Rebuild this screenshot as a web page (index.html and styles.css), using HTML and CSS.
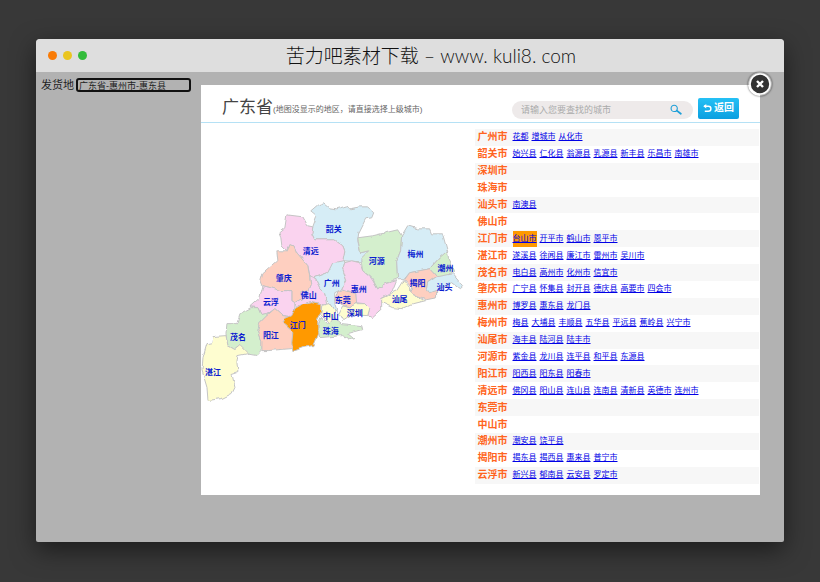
FILE: index.html
```html
<!DOCTYPE html>
<html lang="zh-CN">
<head>
<meta charset="utf-8">
<title>苦力吧素材下载</title>
<link rel="stylesheet" href="styles.css">
</head>
<body>
<div class="window">
  <header class="titlebar">
    <div class="dots"><i class="dot red"></i><i class="dot yellow"></i><i class="dot green"></i></div>
    <h1 class="site">苦力吧素材下载 – <span class="url">www. kuli8. com</span></h1>
  </header>
  <main class="page">
    <div class="origin">
      <label for="origin">发货地</label>
      <input id="origin" type="text" value="广东省-惠州市-惠东县">
    </div>
    <section class="dialog">
      <button class="close" type="button" aria-label="关闭">
        <svg viewBox="0 0 24 24"><circle cx="12" cy="12" r="10" fill="#333" stroke="#fff" stroke-width="1.6"/><path d="M9 9l6 6M15 9l-6 6" stroke="#fff" stroke-width="2.4"/></svg>
      </button>
      <div class="dialog-head">
        <h2 class="province">广东省</h2>
        <p class="hint">(地图没显示的地区，请直接选择上级城市)</p>
        <form class="search">
          <input type="text" aria-label="查找城市" placeholder="请输入您要查找的城市">
          <button class="find" type="button" aria-label="查找">
            <svg viewBox="0 0 12 12"><circle cx="4.2" cy="4.4" r="3.1" fill="none" stroke="#1e9fd8" stroke-width="1.1"/><path d="M6.8 6.6l4 3.1" stroke="#1e9fd8" stroke-width="1.8" stroke-linecap="round"/></svg>
          </button>
        </form>
        <button class="back" type="button">
          <svg viewBox="0 0 10 10"><path d="M1 2.5h5a2.8 2.8 0 0 1 0 5.6H2" fill="none" stroke="#fff" stroke-width="1.6"/><path d="M0.4 2.5L3.6 0v5z" fill="#fff"/></svg>返回
        </button>
      </div>
      <div class="dialog-body">
        <svg class="map" viewBox="201 128 274 356">
          <defs>
            <filter id="coast" x="-5%" y="-5%" width="110%" height="110%">
              <feTurbulence type="fractalNoise" baseFrequency="0.14" numOctaves="1" seed="4"/>
              <feDisplacementMap in="SourceGraphic" scale="4" xChannelSelector="R" yChannelSelector="G"/>
            </filter>
          </defs>
          <g class="areas" filter="url(#coast)">
            <path class="blue" d="M324 202L330 207 337 208 347 205 350 208 360 206 368 206 374 212 372 217 366 218 359 232 358 240 361 252 369 250 362 258 361 261 343 260 345 250 343 245 335 239 315 239 312 233 313 226 317 215 311 210 318 204Z"/>
            <path class="pink" d="M287 214L303 216 308 225 313 226 312 233 315 239 335 239 343 245 345 250 343 260 328 272 315 277 310 275 308 265 297 252 294 245 289 244 287 250 282 245 281 237 279 232 285 227Z"/>
            <path class="peach" d="M294 245L297 252 308 265 310 277 311 283 308 290 301 292 302 298 295 302 292 300 292 290 282 290 263 285 261 280 263 273 278 260 277 250 287 250 289 244Z"/>
            <path class="pink" d="M263 285L282 290 292 290 292 300 295 302 295 310 292 316 283 315 275 308 268 313 261 314 258 307 250 306 260 297Z"/>
            <path class="pink" d="M310 275L315 277 320 287 325 292 327 305 318 302 310 301 297 308 295 302 302 298 301 292 308 290 311 283Z"/>
            <path class="green" d="M251 307L258 307 261 314 270 312 267 315 260 322 258 330 262 340 262 349 257 354 245 352 240 345 235 349 228 345 226 333 227 323 237 323 240 313Z"/>
            <path class="peach" d="M275 308L283 315 292 316 283 323 293 332 292 348 268 350 262 350 262 340 258 330 260 322 267 315Z"/>
            <path class="yellow" d="M226 335L228 345 235 349 240 345 248 353 238 355 237 362 238 371 232 373 235 387 232 393 222 398 208 400 207 387 202 370 203 357 207 343 212 342 213 336Z"/>
            <path class="green" d="M321 316L328 323 335 317 342 323 362 325 363 329 348 333 354 338 350 339 343 335 320 337 318 328Z"/>
            <path class="blue" d="M315 277L328 272 333 262 343 260 345 262 343 268 347 280 343 288 335 292 335 303 338 312 333 307 327 300 325 292 320 287Z"/>
            <path class="pink" d="M345 262L352 260 360 262 363 270 372 278 378 288 385 283 397 280 393 290 382 297 382 308 372 317 368 315 370 308 365 303 356 302 356 293 343 288 347 280 343 268Z"/>
            <path class="yellow" d="M343 305L350 307 357 303 365 303 370 308 368 315 352 314 343 320 339 313Z"/>
            <path class="peach" d="M343 289L356 293 357 303 350 307 343 305 335 300 338 291Z"/>
            <path class="yellow" d="M322 305L330 303 335 310 334 317 330 323 325 318 321 314Z"/>
            <path class="green" d="M358 237L373 235 398 229 402 235 401 250 397 260 398 278 385 283 378 288 372 277 363 270 361 258 369 250 361 252Z"/>
            <path class="blue" d="M402 235L408 225 418 228 430 228 432 233 443 233 448 251 440 257 430 268 410 272 405 278 398 278 397 260 401 250Z"/>
            <path class="green" d="M448 250L449 258 455 270 447 275 438 277 430 268 440 257Z"/>
            <path class="peach" d="M405 279L410 272 430 268 437 276 428 282 427 290 437 290 437 297 427 299 418 296 410 292 412 287Z"/>
            <path class="blue" d="M437 276L453 273 463 285 460 288 452 282 438 289 430 292 427 288 428 282Z"/>
            <path class="yellow" d="M404 279L410 287 410 292 425 300 413 303 402 308 393 307 382 302 382 297 397 290Z"/>
            <path class="orange" d="M312 301L321 303 321 312 318 318 318 333 313 345 303 347 293 351 292 342 293 332 283 323 285 318 292 315 295 308 303 303Z"/>
          </g>
          <g class="names">
            <text x="334" y="231">韶关</text><text x="311" y="253">清远</text><text x="284" y="280">肇庆</text><text x="271" y="304">云浮</text><text x="309" y="297">佛山</text><text x="332" y="285">广州</text><text x="377" y="263">河源</text><text x="416" y="256">梅州</text><text x="446" y="270">潮州</text><text x="418" y="285">揭阳</text><text x="445" y="289">汕头</text><text x="400" y="301">汕尾</text><text x="359" y="291">惠州</text><text x="343" y="302">东莞</text><text x="355" y="315">深圳</text><text x="331" y="318">中山</text><text x="331" y="333">珠海</text><text x="298" y="327">江门</text><text x="271" y="337">阳江</text><text x="238" y="339">茂名</text><text x="213" y="374">湛江</text>
          </g>
        </svg>
        <table class="cities">
          <tbody>
            <tr><th scope="row">广州市</th><td><a href="#">花都</a><a href="#">增城市</a><a href="#">从化市</a></td></tr>
            <tr><th scope="row">韶关市</th><td><a href="#">始兴县</a><a href="#">仁化县</a><a href="#">翁源县</a><a href="#">乳源县</a><a href="#">新丰县</a><a href="#">乐昌市</a><a href="#">南雄市</a></td></tr>
            <tr><th scope="row">深圳市</th><td></td></tr>
            <tr><th scope="row">珠海市</th><td></td></tr>
            <tr><th scope="row">汕头市</th><td><a href="#">南澳县</a></td></tr>
            <tr><th scope="row">佛山市</th><td></td></tr>
            <tr><th scope="row">江门市</th><td><a class="active" href="#">台山市</a><a href="#">开平市</a><a href="#">鹤山市</a><a href="#">恩平市</a></td></tr>
            <tr><th scope="row">湛江市</th><td><a href="#">遂溪县</a><a href="#">徐闻县</a><a href="#">廉江市</a><a href="#">雷州市</a><a href="#">吴川市</a></td></tr>
            <tr><th scope="row">茂名市</th><td><a href="#">电白县</a><a href="#">高州市</a><a href="#">化州市</a><a href="#">信宜市</a></td></tr>
            <tr><th scope="row">肇庆市</th><td><a href="#">广宁县</a><a href="#">怀集县</a><a href="#">封开县</a><a href="#">德庆县</a><a href="#">高要市</a><a href="#">四会市</a></td></tr>
            <tr><th scope="row">惠州市</th><td><a href="#">博罗县</a><a href="#">惠东县</a><a href="#">龙门县</a></td></tr>
            <tr><th scope="row">梅州市</th><td><a href="#">梅县</a><a href="#">大埔县</a><a href="#">丰顺县</a><a href="#">五华县</a><a href="#">平远县</a><a href="#">蕉岭县</a><a href="#">兴宁市</a></td></tr>
            <tr><th scope="row">汕尾市</th><td><a href="#">海丰县</a><a href="#">陆河县</a><a href="#">陆丰市</a></td></tr>
            <tr><th scope="row">河源市</th><td><a href="#">紫金县</a><a href="#">龙川县</a><a href="#">连平县</a><a href="#">和平县</a><a href="#">东源县</a></td></tr>
            <tr><th scope="row">阳江市</th><td><a href="#">阳西县</a><a href="#">阳东县</a><a href="#">阳春市</a></td></tr>
            <tr><th scope="row">清远市</th><td><a href="#">佛冈县</a><a href="#">阳山县</a><a href="#">连山县</a><a href="#">连南县</a><a href="#">清新县</a><a href="#">英德市</a><a href="#">连州市</a></td></tr>
            <tr><th scope="row">东莞市</th><td></td></tr>
            <tr><th scope="row">中山市</th><td></td></tr>
            <tr><th scope="row">潮州市</th><td><a href="#">潮安县</a><a href="#">饶平县</a></td></tr>
            <tr><th scope="row">揭阳市</th><td><a href="#">揭东县</a><a href="#">揭西县</a><a href="#">惠来县</a><a href="#">普宁市</a></td></tr>
            <tr><th scope="row">云浮市</th><td><a href="#">新兴县</a><a href="#">郁南县</a><a href="#">云安县</a><a href="#">罗定市</a></td></tr>
          </tbody>
        </table>
      </div>
    </section>
  </main>
</div>
</body>
</html>
```
FILE: styles.css
```css
* { box-sizing: border-box; }

body {
  margin: 0;
  padding: 39px 36px 40px;
  background: #383838;
  font-family: "Liberation Sans", "Noto Sans CJK SC", sans-serif;
  color: #222;
}

button, input { font: inherit; }
button { border: 0; padding: 0; cursor: pointer; }
h1, h2, p { margin: 0; font-weight: 400; }
svg { display: block; }

.window {
  border-radius: 4px 4px 2px 2px;
  background: #b2b2b2;
  box-shadow: 0 8px 24px rgba(0, 0, 0, 0.5);
}

.titlebar {
  display: grid;
  grid-template-columns: 1fr auto 1fr;
  align-items: center;
  height: 33px;
  padding: 0 12px;
  border-radius: 4px 4px 0 0;
  background: #dedede;
}
.dots { display: flex; gap: 6px; }
.dot { width: 9px; height: 9px; border-radius: 50%; }
.red { background: #f97b06; }
.yellow { background: #eac51f; }
.green { background: #32bc3a; }
.site {
  padding-left: 42px;
  font: 300 19px/28px Lato, "Noto Sans CJK SC", sans-serif;
  color: #111;
  white-space: nowrap;
}

.page {
  display: flex;
  align-items: flex-start;
  gap: 10px;
  padding: 13px 24px 47px 5px;
}
.origin {
  display: flex;
  flex: none;
  align-items: center;
  gap: 2px;
  margin-top: -7px;
  font-size: 11px;
  line-height: 14px;
}
.origin label { white-space: nowrap; }
.origin input {
  width: 115px;
  height: 14px;
  padding: 0 1px;
  border: 2px solid #111;
  border-radius: 3px;
  background: transparent;
  color: #222;
  font-size: 9px;
  line-height: 10px;
}

.dialog {
  position: relative;
  flex: 1;
  min-width: 0;
  background: #fff;
}
.close {
  position: absolute;
  top: -13px;
  right: -12px;
  width: 24px;
  height: 24px;
  border-radius: 50%;
  background: none;
  box-shadow: 0 0 2px rgba(0, 0, 0, 0.7);
}

.dialog-head {
  display: flex;
  align-items: center;
  height: 38px;
  padding: 8px 21px 0;
  border-bottom: 1px solid #b5e1f5;
}
.province {
  color: #444;
  font-size: 17px;
  line-height: 24px;
  white-space: nowrap;
}
.hint {
  flex: 1;
  padding-top: 5px;
  color: #666;
  font-size: 8px;
  line-height: 12px;
  white-space: nowrap;
}
.search {
  display: flex;
  align-items: center;
  width: 181px;
  height: 18px;
  margin: 4px 5px 0 0;
  padding: 0 11px 0 9px;
  border-radius: 9px;
  background: #eeeaea;
}
.search input {
  flex: 1;
  min-width: 0;
  padding: 0;
  border: 0;
  outline: 0;
  background: none;
  font-size: 9px;
}
.search input::placeholder { color: #aaa; }
.find { width: 12px; height: 12px; background: none; }
.back {
  display: flex;
  align-items: center;
  justify-content: center;
  gap: 2px;
  width: 41px;
  height: 21px;
  margin-top: 1px;
  border-radius: 2px;
  background: linear-gradient(#25c0f5, #0b9fe0);
  color: #fff;
  font-size: 10px;
  font-weight: 700;
  line-height: 12px;
}
.back svg { width: 9px; height: 9px; }

.dialog-body {
  display: grid;
  grid-template-columns: minmax(0, 274fr) minmax(0, 285fr);
  align-items: start;
  padding: 6px 1px 11px 0;
}
.map { width: 100%; }
.areas path { stroke: #c4c4c4; stroke-width: 1; stroke-linejoin: round; }
.blue { fill: #d6edf6; }
.pink { fill: #fad3ef; }
.peach { fill: #fecfc0; }
.areas .green { fill: #d4efcd; }
.areas .yellow { fill: #fefdd0; }
.areas .orange { fill: #ff9900; }
.names {
  fill: #0a1cd0;
  font-size: 8px;
  font-weight: 700;
  text-anchor: middle;
}

.cities {
  width: 100%;
  height: 355px;
  border-collapse: collapse;
  line-height: 16px;
}
.cities tr:nth-child(odd) { background: #f7f7f7; }
.cities th, .cities td { padding: 0; text-align: left; }
.cities th {
  width: 38px;
  padding-left: 3px;
  color: #ff6420;
  font-size: 10px;
  white-space: nowrap;
}
.cities td { font-size: 8px; white-space: nowrap; }
.cities a {
  display: inline-block;
  margin-right: 3px;
  color: #0000e6;
  vertical-align: top;
}
.cities .active { background: #ff9900; }
```
